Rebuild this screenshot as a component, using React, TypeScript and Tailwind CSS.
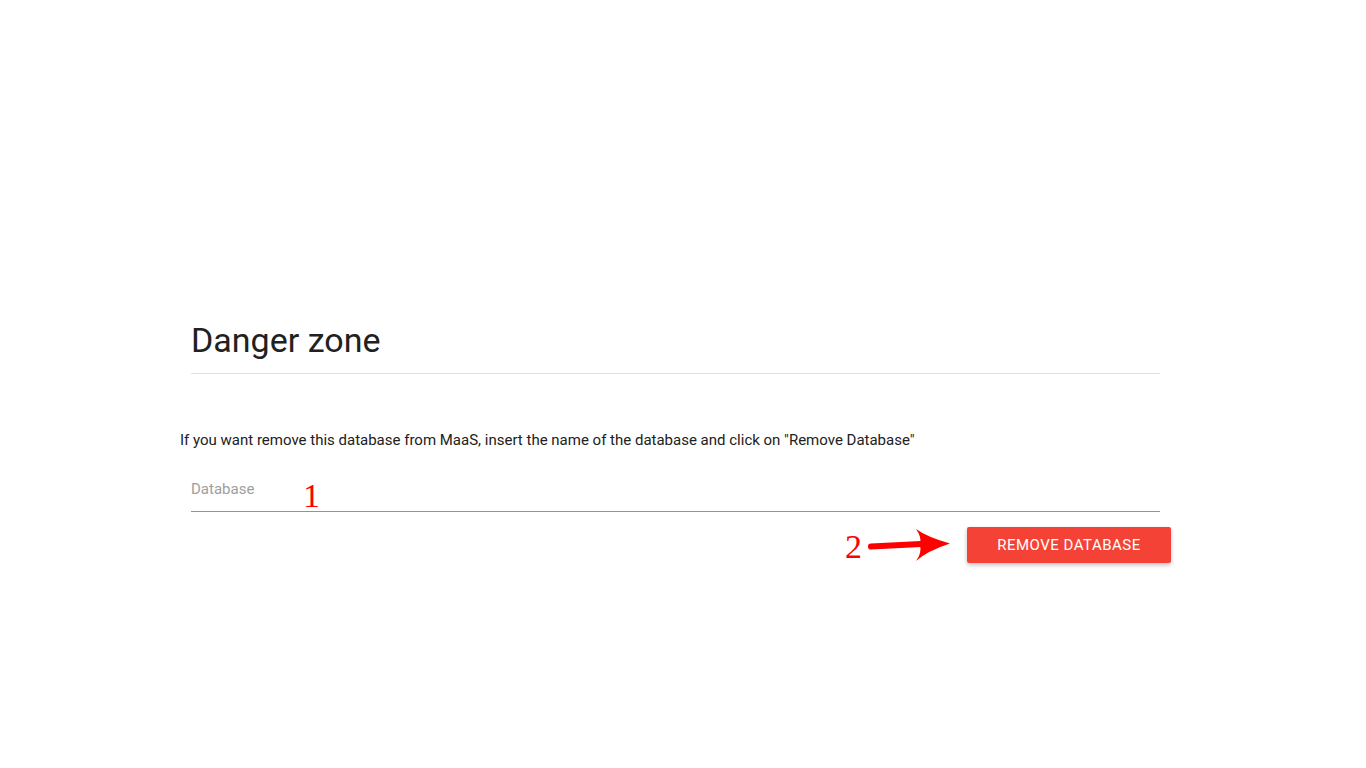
import React from 'react'

const App: React.FC = () => {
  return (
    <div className="relative min-h-screen bg-white font-['Roboto','Liberation_Sans',sans-serif]">
      <div className="ml-[180px] w-[991px] pt-[320px]">
        <div className="mx-[11px] border-b border-[#e0e0e0] pb-[13px]">
          <h1 className="text-[34px] leading-[40px] font-normal text-[#212121]">Danger zone</h1>
        </div>

        <p className="mt-[56px] text-[15px] leading-[20px] text-[#212121]">
          If you want remove this database from MaaS, insert the name of the database and click on "Remove Database"
        </p>

        <div className="mx-[11px] mt-[29px] border-b border-[#949494] pb-[12px]">
          <input
            type="text"
            placeholder="Database"
            className="block w-full h-[20px] text-[15px] leading-[20px] text-[#212121] placeholder:text-[#9e9e9e] outline-none bg-transparent"
          />
        </div>

        <div className="mt-[15px] flex justify-end">
          <button
            type="button"
            className="w-[204px] h-[36px] rounded-[2px] bg-[#f44336] text-white text-[15px] tracking-[0.5px] uppercase shadow-[0_2px_4px_rgba(0,0,0,0.25)]"
          >
            Remove Database
          </button>
        </div>
      </div>

      {/* annotations drawn over the page */}
      <span className="absolute left-[303px] top-[479px] text-[34px] leading-none text-[#ff0000] font-['Liberation_Serif',serif]">
        1
      </span>
      <span className="absolute left-[845px] top-[530px] text-[34px] leading-none text-[#ff0000] font-['Liberation_Serif',serif]">
        2
      </span>
      <svg className="absolute left-[865px] top-[525px]" width="90" height="40" viewBox="0 0 90 40">
        <path d="M6 21.5 L56 19" stroke="#ff0000" strokeWidth="6" strokeLinecap="round" fill="none" />
        <path d="M51 4 Q62 12 85 18.5 Q62 26 51 36 Q57 28 55 20 Q57 12 51 4 Z" fill="#ff0000" />
      </svg>
    </div>
  )
}

export default App
